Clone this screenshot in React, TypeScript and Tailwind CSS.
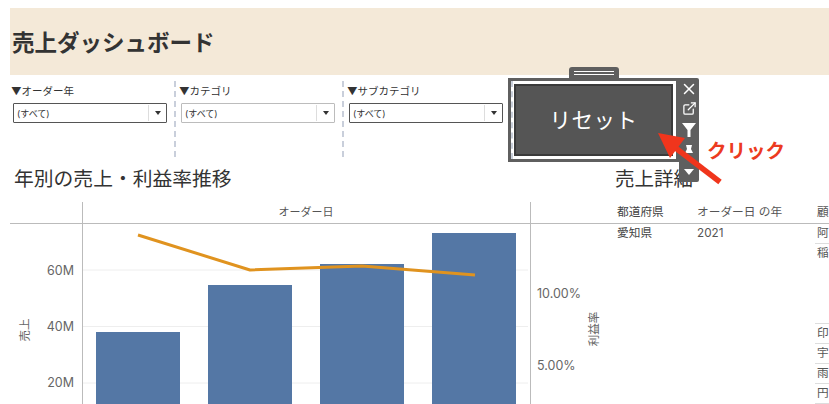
import React from 'react';
import { ExternalLink, X } from 'lucide-react';

const FONT = 'Inter, "Noto Sans CJK JP", sans-serif';

const filters = [
  { label: '▼オーダー年', border: 'border-[#555555]' },
  { label: '▼カテゴリ', border: 'border-[#bcbcbc]' },
  { label: '▼サブカテゴリ', border: 'border-[#555555]' },
];

const bars = [
  { x: 96, top: 332 },
  { x: 208, top: 285 },
  { x: 320, top: 264 },
  { x: 432, top: 233 },
];

const customerRows = [
  { name: '阿', height: 'h-[20px]' },
  { name: '稲', height: 'h-[80px]' },
  { name: '印', height: 'h-[20px]' },
  { name: '宇', height: 'h-[20px]' },
  { name: '雨', height: 'h-[20px]' },
  { name: '円', height: 'h-[20px]' },
];

const FilterBox = ({ label, border, divider }: { label: string; border: string; divider: boolean }) => (
  <div className={`h-[76px] mt-[6px] flex flex-col ${divider ? 'w-[168px] pl-[5px] border-l-2 border-dashed border-[#c9cfdb]' : 'w-[164px] pl-[3px]'}`}>
    <div className="text-[10.5px] leading-[16px] text-[#333333] -ml-[3px] pl-[1px] mt-[3px]">{label}</div>
    <div className={`mt-[3px] w-[154px] h-[20px] flex items-center bg-white border rounded-[1px] ${border}`}>
      <span className="flex-1 pl-[3px] text-[9px] leading-none text-[#333333]">(すべて)</span>
      <span className="w-[18px] h-[16px] flex items-center justify-center border-l border-[#dddddd]">
        <svg viewBox="0 0 6 4" className="w-[6px] h-[4px]">
          <path d="M0 0H6L3 4Z" fill="#333333" />
        </svg>
      </span>
    </div>
  </div>
);

const SalesChart = () => (
  <svg viewBox="10 202 600 202" className="block w-[600px] h-[202px]" style={{ fontFamily: FONT }}>
    {[270, 326.5, 383].map((y) => (
      <line key={y} x1={82} x2={528} y1={y} y2={y} stroke="#eeeeee" strokeWidth={1} />
    ))}
    <line x1={10} x2={610} y1={223.5} y2={223.5} stroke="#bbbbbb" />
    <line x1={82.5} x2={82.5} y1={202} y2={404} stroke="#bbbbbb" />
    <line x1={530.5} x2={530.5} y1={202} y2={404} stroke="#bbbbbb" />
    {bars.map((bar) => (
      <rect key={bar.x} x={bar.x} y={bar.top} width={84} height={404 - bar.top} fill="#5477a5" />
    ))}
    <polyline points="138,235 250,270 362,266 475,275" fill="none" stroke="#e0931f" strokeWidth={3} strokeLinejoin="round" />
    <text x={306} y={216} textAnchor="middle" fontSize={11} fill="#555555">オーダー日</text>
    {[['60M', 275], ['40M', 331], ['20M', 387]].map(([label, y]) => (
      <text key={label} x={74} y={y} textAnchor="end" fontSize={12.5} fill="#666666">{label}</text>
    ))}
    <text x={537} y={298} fontSize={12.5} fill="#666666">10.00%</text>
    <text x={537} y={370} fontSize={12.5} fill="#666666">5.00%</text>
    <text transform="translate(29 330) rotate(-90)" textAnchor="middle" fontSize={11.5} fill="#666666">売上</text>
    <text transform="translate(598 329) rotate(-90)" textAnchor="middle" fontSize={11.5} fill="#666666">利益率</text>
  </svg>
);

const DetailTable = () => (
  <div className="grid grid-cols-[80px_120px_29px] text-[11.7px] text-[#555555] overflow-hidden">
    <div className="h-[22px] pl-[7px] leading-[20px] border-b border-[#bbbbbb] text-[#444444]">都道府県</div>
    <div className="h-[22px] pl-[7px] leading-[20px] border-b border-[#bbbbbb] whitespace-nowrap">オーダー日 の年</div>
    <div className="h-[22px] pl-[7px] leading-[20px] border-b border-[#bbbbbb]">顧</div>
    <div className="pl-[7px] leading-[18px] text-[#444444]">愛知県</div>
    <div className="pl-[7px] leading-[18px]">2021</div>
    <div className="pl-[5px]">
      {customerRows.map((row) => (
        <div key={row.name} className={`${row.height} pl-[2px] leading-[18px] border-b border-[#dddddd]`}>{row.name}</div>
      ))}
    </div>
  </div>
);

const App: React.FC = () => {
  return (
    <div className="relative w-[829px] h-[404px] overflow-hidden bg-white pt-[8px]" style={{ fontFamily: FONT }}>
      <div className="ml-[10px] h-[67px] flex items-center bg-[#f4e9d8] pl-[2px] pt-[3px]">
        <h1 className="text-[22.5px] font-semibold text-[#333333] leading-none">売上ダッシュボード</h1>
      </div>

      <div className="ml-[10px] h-[85px] flex">
        {filters.map((filter, idx) => (
          <FilterBox key={filter.label} label={filter.label} border={filter.border} divider={idx > 0} />
        ))}
      </div>

      <div className="ml-[10px] grid grid-cols-[600px_219px]">
        <div>
          <h2 className="h-[42px] pl-[4px] pt-[6px] text-[19.8px] leading-[26px] font-normal text-[#333333]">年別の売上・利益率推移</h2>
          <SalesChart />
        </div>
        <div>
          <h2 className="h-[42px] pl-[5px] pt-[6px] text-[19.5px] leading-[26px] font-normal text-[#333333]">売上詳細</h2>
          <DetailTable />
        </div>
      </div>

      {/* selected reset button with its floating toolbar */}
      <div className="absolute left-[569px] top-[67px] w-[50px] h-[12px] rounded-t-[3px] bg-[#5f5f5f] flex flex-col items-center justify-center gap-[2px]">
        <div className="w-[40px] h-px bg-white" />
        <div className="w-[40px] h-px bg-white" />
      </div>
      <div className="absolute left-[508px] top-[78px] w-[171px] h-[84px] border-[3px] border-[#5f5f5f] bg-white">
        <div className="w-full h-full border-l-2 border-dashed border-[#c9cfdb] pl-[1px] py-[3px] pr-[3px]">
          <div className="w-full h-full flex items-center justify-center border-2 border-[#3a3a3a] bg-[#555555] text-white text-[21.5px] font-normal tracking-[0.5px]">リセット</div>
        </div>
      </div>
      <div className="absolute left-[679px] top-[78px] w-[20px] h-[104px] rounded-r-[2px] bg-[#5f5f5f] flex flex-col items-center text-white">
        <X className="w-[18px] h-[18px] mt-[2px]" strokeWidth={2} />
        <ExternalLink className="w-[15px] h-[15px] mt-[3px]" strokeWidth={2} />
        <svg viewBox="0 0 14 14" className="w-[14px] h-[14px] mt-[7px]">
          <path d="M0 0H14L8.5 7V14H5.500V7Z" fill="white" />
        </svg>
        <svg viewBox="0 0 12 12" className="w-[12px] h-[12px] mt-[7px]">
          <path d="M3 1H9L8 5L10 9H2L4 5Z" fill="white" />
        </svg>
        <svg viewBox="0 0 10 6" className="w-[10px] h-[6px] mt-[13px]">
          <path d="M0 0H10L5 6Z" fill="white" />
        </svg>
      </div>

      {/* red annotation */}
      <svg viewBox="0 0 829 404" className="absolute inset-0 w-[829px] h-[404px] pointer-events-none">
        <path d="M720 182L673 146" stroke="#f0351c" strokeWidth={5.500} fill="none" />
        <path d="M658 133L685 138L670 158Z" fill="#f0351c" />
      </svg>
      <div className="absolute left-[707px] top-[138px] text-[19.500px] leading-[26px] font-bold text-[#ec3a20] whitespace-nowrap">クリック</div>
    </div>
  );
};

export default App;
